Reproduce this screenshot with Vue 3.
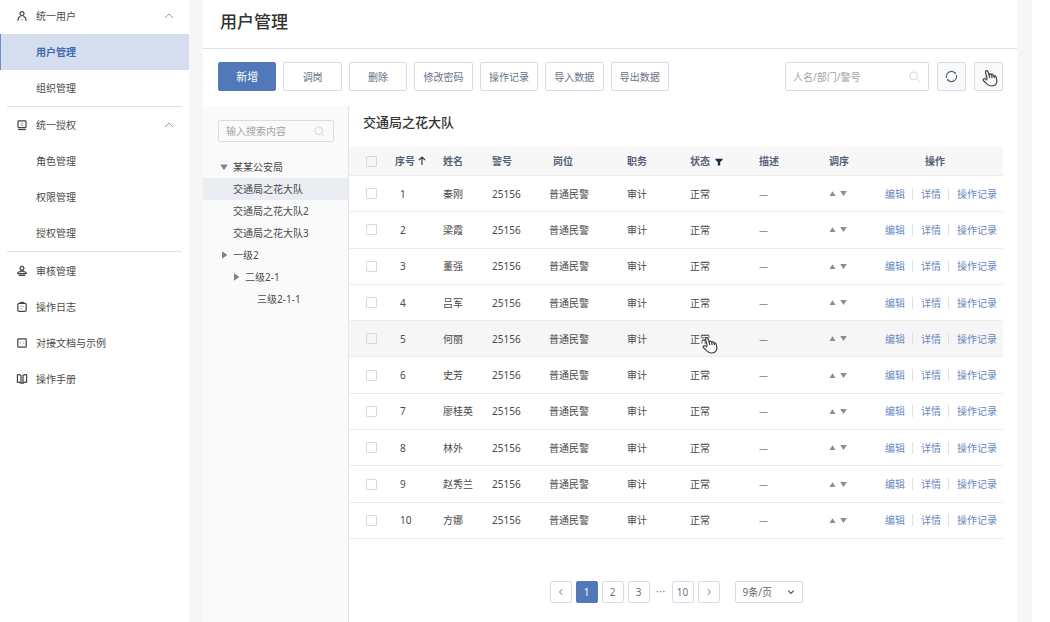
<script setup>
import { ref } from 'vue'

const groups = [
  {
    divided: true,
    items: [
      { label: '统一用户', icon: 'user', open: true },
      { label: '用户管理', active: true },
      { label: '组织管理' },
    ],
  },
  {
    divided: true,
    items: [
      { label: '统一授权', icon: 'screen', open: true },
      { label: '角色管理' },
      { label: '权限管理' },
      { label: '授权管理' },
    ],
  },
  {
    items: [
      { label: '审核管理', icon: 'stamp' },
      { label: '操作日志', icon: 'log' },
      { label: '对接文档与示例', icon: 'doc' },
      { label: '操作手册', icon: 'book' },
    ],
  },
]

const actions = ['新增', '调岗', '删除', '修改密码', '操作记录', '导入数据', '导出数据']

const tree = [
  { label: '某某公安局', level: 0, arrow: 'down' },
  { label: '交通局之花大队', level: 0, active: true },
  { label: '交通局之花大队2', level: 0 },
  { label: '交通局之花大队3', level: 0 },
  { label: '一级2', level: 0, arrow: 'right' },
  { label: '二级2-1', level: 1, arrow: 'right' },
  { label: '三级2-1-1', level: 2 },
]

const names = ['秦刚', '梁霞', '董强', '吕军', '何丽', '史芳', '廖桂英', '林外', '赵秀兰', '方娜']
const hovered = 4
const checked = ref([])
const keyword = ref('')
const treeKeyword = ref('')
const pageSize = ref('9')
</script>

<template>
  <div class="page">
    <nav class="sidebar">
      <ul v-for="(g, gi) in groups" :key="gi" class="group" :class="{ divided: g.divided }">
        <li v-for="item in g.items" :key="item.label">
          <a href="#" class="nav-item" :class="{ active: item.active }">
            <span class="nav-icon">
              <svg v-if="item.icon === 'user'" viewBox="0 0 12 12"><circle cx="6" cy="3.7" r="2" /><path d="M2 10.8V9.4C2 7.8 3.2 6.8 4.6 6.2M7.4 6.2C8.8 6.8 10 7.8 10 9.4V10.8" /><path class="faint" d="M4.6 9.8H7.4" /></svg>
              <svg v-else-if="item.icon === 'screen'" viewBox="0 0 12 12"><rect x="2" y="1.8" width="8" height="6.8" rx="0.8" /><path d="M2 10.5H10" /><path class="faint" d="M4.7 4.2H7.3M6 4.2V6.4M4.7 6.4H7.3" /></svg>
              <svg v-else-if="item.icon === 'stamp'" viewBox="0 0 12 12"><circle cx="6" cy="3.2" r="1.9" /><path d="M5.2 5V6.4L2.6 7Q1.7 7.3 1.7 8.6H10.3Q10.3 7.3 9.4 7L6.8 6.4V5M2.8 10.4H9.2" /></svg>
              <svg v-else-if="item.icon === 'log'" viewBox="0 0 12 12"><rect x="1.8" y="2.4" width="8.4" height="8" rx="1.2" /><path d="M4 1.5H8" /><path class="faint" d="M4 5.3H8M4 7.6H6.5" /></svg>
              <svg v-else-if="item.icon === 'doc'" viewBox="0 0 12 12"><rect x="1.8" y="1.8" width="8.4" height="8.4" rx="0.8" /><path class="faint" d="M5 4.8L3.8 6L5 7.2M7 4.8L8.2 6L7 7.2M5.6 8.4H6.4" /></svg>
              <svg v-else-if="item.icon === 'book'" viewBox="0 0 12 12"><path d="M5 10.2V2.4Q3.4 1.2 1.4 1.8V9.2Q3.4 8.8 5 10.2H7Q8.6 8.8 10.6 9.2V1.8Q8.6 1.2 7 2.4V10.2" /></svg>
            </span>
            <span class="nav-label">{{ item.label }}</span>
            <svg v-if="item.open" class="nav-chevron" viewBox="0 0 10 10"><path d="M1 7L5 3L9 7" /></svg>
          </a>
        </li>
      </ul>
    </nav>

    <main class="content">
      <header class="title-bar"><h1>用户管理</h1></header>

      <div class="toolbar">
        <div class="actions">
          <button v-for="(a, i) in actions" :key="a" type="button" class="btn" :class="{ primary: i === 0 }">{{ a }}</button>
        </div>
        <div class="tools">
          <div class="field search">
            <input v-model="keyword" type="text" aria-label="人名/部门/警号" placeholder="人名/部门/警号" />
            <svg class="lens" viewBox="0 0 12 12"><circle cx="5.2" cy="5.2" r="4.2" /><path d="M8.2 8.2L11.3 11.3" /></svg>
          </div>
          <button type="button" class="icon-btn" aria-label="刷新">
            <svg class="refresh" viewBox="0 0 14 14"><path d="M1.8 8.6A5.4 5.4 0 0 1 10.6 3M12.2 5.4A5.4 5.4 0 0 1 3.4 11" /><path class="tip" d="M9.6 3.9L11.6 1.8L11.8 4.4ZM4.4 10.1L2.4 12.2L2.2 9.6Z" /></svg>
          </button>
          <button type="button" class="icon-btn" aria-label="列设置">
            <svg class="list" viewBox="0 0 12 12"><path d="M1 2H2.5M1 6H2.5M1 10H2.5M4.5 2H11M4.5 6H11M4.5 10H11" /></svg>
            <svg class="hand hand-tool" viewBox="0 0 16 18"><path d="M5.2 9.8L3.6 3.4Q3.3 2 4.4 1.7T6 2.8L7 6Q7.4 5 8.4 5.2T9.6 6.4Q10 5.7 10.9 5.9T12 7.2Q12.5 6.6 13.3 7T14.3 8.8L14.8 11.6Q15 16.6 9.8 17Q7.4 17.2 5.4 15.4L1.6 11.8Q0.8 10.6 1.7 10T3.6 10L5.4 11.2" /><path d="M7 6L7.8 9M9.6 6.4L10.2 9M12 7.2L12.5 9.2" /></svg>
          </button>
        </div>
      </div>

      <div class="body">
        <aside class="tree-panel">
          <div class="field tree-search">
            <input v-model="treeKeyword" type="text" aria-label="输入搜索内容" placeholder="输入搜索内容" />
            <svg class="lens" viewBox="0 0 12 12"><circle cx="5.2" cy="5.2" r="4.2" /><path d="M8.2 8.2L11.3 11.3" /></svg>
          </div>
          <ul class="tree">
            <li v-for="n in tree" :key="n.label" class="node" :class="['level-' + n.level, { active: n.active }]">
              <span class="arrow">
                <svg v-if="n.arrow === 'down'" viewBox="0 0 8 8"><path d="M0.3 1.5H7.7L4.6 6.5H3.4Z" /></svg>
                <svg v-else-if="n.arrow === 'right'" viewBox="0 0 8 8"><path d="M2 0.3L6.8 3.4V4.6L2 7.7Z" /></svg>
              </span>
              <span>{{ n.label }}</span>
            </li>
          </ul>
        </aside>

        <section class="list-panel">
          <h2>交通局之花大队</h2>
          <div class="table-wrap">
            <table>
              <colgroup>
                <col class="w-check" /><col class="w-index" /><col class="w-name" /><col class="w-code" /><col class="w-post" />
                <col class="w-duty" /><col class="w-state" /><col class="w-desc" /><col class="w-sort" /><col class="w-ops" />
              </colgroup>
              <thead>
                <tr>
                  <th class="check"><input type="checkbox" aria-label="全选" /></th>
                  <th>序号<svg class="sort-icon" viewBox="0 0 8 10"><path d="M4 9V1M1 4L4 1L7 4" /></svg></th>
                  <th>姓名</th>
                  <th>警号</th>
                  <th class="post">岗位</th>
                  <th>职务</th>
                  <th>状态<svg class="filter-icon" viewBox="0 0 8 8"><path d="M0.5 0.8H7.5V2L5.2 4V7.5H2.8V4L0.5 2Z" /></svg></th>
                  <th>描述</th>
                  <th>调序</th>
                  <th class="ops-head">操作</th>
                </tr>
              </thead>
              <tbody>
                <tr v-for="(name, i) in names" :key="name" :class="{ hovered: i === hovered }">
                  <td class="check"><input v-model="checked" type="checkbox" :value="i" :aria-label="'选择' + name" /></td>
                  <td class="index">{{ i + 1 }}</td>
                  <td>{{ name }}</td>
                  <td>25156</td>
                  <td>普通民警</td>
                  <td>审计</td>
                  <td class="state">
                    正常
                    <svg v-if="i === hovered" class="hand hand-row" viewBox="0 0 16 18"><path d="M5.2 9.8L3.6 3.4Q3.3 2 4.4 1.7T6 2.8L7 6Q7.4 5 8.4 5.2T9.6 6.4Q10 5.7 10.9 5.9T12 7.2Q12.5 6.6 13.3 7T14.3 8.8L14.8 11.6Q15 16.6 9.8 17Q7.4 17.2 5.4 15.4L1.6 11.8Q0.8 10.6 1.7 10T3.6 10L5.4 11.2" /><path d="M7 6L7.8 9M9.6 6.4L10.2 9M12 7.2L12.5 9.2" /></svg>
                  </td>
                  <td class="desc">—</td>
                  <td>
                    <div class="sorter">
                      <button type="button" aria-label="上移"><svg viewBox="0 0 7 7"><path d="M3.5 1.2L6.5 6H0.5Z" /></svg></button>
                      <button type="button" aria-label="下移"><svg viewBox="0 0 7 7"><path d="M3.5 6L6.8 1H0.2Z" /></svg></button>
                    </div>
                  </td>
                  <td>
                    <div class="ops"><a href="#">编辑</a><i></i><a href="#">详情</a><i></i><a href="#">操作记录</a></div>
                  </td>
                </tr>
              </tbody>
            </table>
          </div>
          <div class="pager">
            <button type="button" aria-label="上一页"><svg viewBox="0 0 8 8"><path d="M5.2 1.2L2.5 4L5.2 6.8" /></svg></button>
            <button type="button" class="current">1</button>
            <button type="button">2</button>
            <button type="button">3</button>
            <span class="dots">…</span>
            <button type="button">10</button>
            <button type="button" aria-label="下一页"><svg viewBox="0 0 8 8"><path d="M2.8 1.2L5.5 4L2.8 6.8" /></svg></button>
            <div class="size">
              <select v-model="pageSize" aria-label="每页条数"><option value="9">9条/页</option></select>
              <svg viewBox="0 0 8 8"><path d="M1.2 2.7L4 5.5L6.8 2.7" /></svg>
            </div>
          </div>
        </section>
      </div>
    </main>
  </div>
</template>

<style>
body { background: #fff; }
</style>

<style scoped>
.page, .page * { box-sizing: border-box; }
.page {
  display: flex;
  height: 100vh;
  min-height: 600px;
  padding-right: 18px;
  overflow: hidden;
  font-family: "Noto Sans", "Noto Sans CJK SC", sans-serif;
  font-size: 10px;
  line-height: 16px;
  color: #4a4a4a;
}
ul { list-style: none; margin: 0; padding: 0; }
a { text-decoration: none; color: inherit; }
button, input, select { font: inherit; color: inherit; margin: 0; }
button { padding: 0; cursor: pointer; }
svg { display: block; fill: none; stroke: currentColor; flex: none; }

.sidebar { width: 189px; flex: none; background: #fff; }
.group.divided::after {
  content: "";
  display: block;
  height: 1px;
  margin: 0 7px;
  background: #dedfe0;
}
.group:last-child { padding-top: 1px; }
.nav-item { display: flex; align-items: center; height: 36px; padding-left: 16px; }
.group:first-child li:first-child .nav-item { height: 34px; padding-bottom: 2px; }
.nav-item.active { background: #d4deef; color: #4169ac; font-weight: 700; box-shadow: inset 1px 0 #6d8ec6; }
.nav-icon { width: 20px; }
.nav-icon svg { width: 12px; height: 12px; stroke-width: 1.2; color: #444; }
.nav-icon .faint { stroke: #999; stroke-width: 0.7; }
.nav-chevron { width: 10px; height: 10px; margin-left: auto; margin-right: 15px; stroke: #999; }

.content {
  flex: 1;
  min-width: 0;
  display: flex;
  flex-direction: column;
  border: solid #f6f6f6;
  border-width: 0 15px 0 14px;
  background: #fff;
}
.title-bar { height: 49px; padding: 10px 17px 0; border-bottom: 1px solid #dfe0e4; flex: none; }
h1 { margin: 0; font-size: 17px; line-height: 24px; font-weight: 500; color: #333; }
.toolbar { display: flex; justify-content: space-between; padding: 13px 14px 15px 15px; flex: none; }
.actions { display: flex; gap: 7px; width: 451px; }
.btn {
  flex: 1;
  height: 29px;
  border: 1px solid #d9dce3;
  border-radius: 2px;
  background: #fff;
  color: #68718a;
}
.btn.primary { background: #5178b8; border-color: #5178b8; color: #fff; font-size: 11px; }
.tools { display: flex; gap: 8px; }
.field { position: relative; display: flex; align-items: center; }
.field input {
  width: 100%;
  height: 100%;
  padding: 0 28px 0 7px;
  border: 1px solid #d9dce3;
  border-radius: 2px;
  background: transparent;
  outline: none;
}
.field input::placeholder { color: #a3a3a3; opacity: 1; }
.lens { position: absolute; right: 9px; width: 11px; height: 11px; stroke: #d0d4dc; }
.search { width: 144px; height: 29px; }
.icon-btn {
  position: relative;
  display: flex;
  align-items: center;
  justify-content: center;
  width: 29px;
  height: 29px;
  border: 1px solid #d9dce3;
  border-radius: 2px;
  background: #f8f9fa;
  color: #565c6a;
}
.refresh { width: 13px; height: 13px; stroke-width: 1.2; }
.refresh .tip { fill: currentColor; stroke: none; }
.list { width: 10px; height: 10px; stroke: #8a95b0; }
.hand { position: absolute; width: 16px; height: 18px; fill: #fff; stroke: #444; stroke-width: 1.2; stroke-linejoin: round; }
.hand-tool { left: 7px; top: 6px; }
.hand-row { left: 12px; top: 15px; z-index: 1; }

.body { flex: 1; min-height: 0; display: flex; }
.tree-panel { width: 146px; flex: none; padding-top: 14px; background: #fafafa; border-right: 1px solid #e3e5e8; }
.tree-search { height: 22px; margin: 0 14px 14px 15px; }
.node { display: flex; align-items: center; height: 22px; padding-left: 17px; }
.node.level-1 { padding-left: 29px; }
.node.level-2 { padding-left: 41px; }
.node.active { background: #eaedf2; }
.arrow { width: 13px; }
.arrow svg { width: 8px; height: 8px; fill: #7a8499; stroke: none; }

.list-panel { flex: 1; min-width: 0; display: flex; flex-direction: column; padding-right: 14px; }
h2 { margin: 0; padding: 6px 14px 15px; font-size: 13px; line-height: 20px; font-weight: 500; color: #333; }
.table-wrap { flex: 1; min-height: 0; }
table { width: 100%; height: 100%; table-layout: fixed; border-collapse: separate; border-spacing: 0; }
.w-check { width: 46px; }
.w-index { width: 48px; }
.w-name { width: 49px; }
.w-code { width: 57px; }
.w-post { width: 78px; }
.w-duty { width: 63px; }
.w-state { width: 69px; }
.w-desc { width: 70px; }
.w-sort { width: 56px; }
.w-ops { width: 118px; }
th, td { padding: 0; text-align: left; vertical-align: middle; white-space: nowrap; border-bottom: 1px solid #ececee; }
thead tr { height: 29px; }
th { background: #f7f7f8; color: #566077; font-weight: 700; }
th svg { display: inline-block; vertical-align: middle; }
.sort-icon { width: 8px; height: 10px; margin: 0 0 2px 3px; stroke: #333b52; stroke-width: 1.2; }
.filter-icon { width: 8px; height: 8px; margin-left: 5px; fill: #222b45; stroke: none; }
.check { padding-left: 17px; }
.check input {
  display: block;
  appearance: none;
  width: 11px;
  height: 11px;
  border: 1px solid #d5d9e2;
  border-radius: 1px;
}
.index { padding-left: 5px; }
.post { padding-left: 4px; }
.state { position: relative; }
.desc { font-family: "Noto Sans CJK SC", sans-serif; color: #777; }
.ops-head { padding-left: 40px; }
.hovered td { background: #f6f6f6; }
.sorter { display: flex; gap: 4px; }
.sorter button { border: 0; background: none; }
.sorter svg { width: 7px; height: 7px; fill: #8d8d8d; stroke: none; }
.ops { display: flex; align-items: center; color: #6888c0; }
.ops i { width: 1px; height: 12px; margin: 0 8px 0 7px; background: #dfe0e4; }

.pager { display: flex; justify-content: center; gap: 4px; flex: none; padding: 42px 0 19px; color: #68718a; }
.pager button {
  display: flex;
  align-items: center;
  justify-content: center;
  width: 22px;
  height: 22px;
  border: 1px solid #d9dce3;
  border-radius: 2px;
  background: #fff;
}
.pager svg { width: 8px; height: 8px; }
.pager .current { background: #5178b8; border-color: #5178b8; color: #fff; }
.dots { width: 14px; line-height: 22px; text-align: center; font-family: "Noto Sans CJK SC", sans-serif; }
.size { position: relative; display: flex; align-items: center; width: 68px; height: 22px; margin-left: 11px; }
.size select {
  width: 100%;
  height: 100%;
  appearance: none;
  padding: 0 0 0 7px;
  border: 1px solid #d9dce3;
  border-radius: 2px;
  background: #fff;
  color: #666;
}
.size svg { position: absolute; right: 8px; stroke: #4b5368; stroke-width: 1.2; pointer-events: none; }
</style>
